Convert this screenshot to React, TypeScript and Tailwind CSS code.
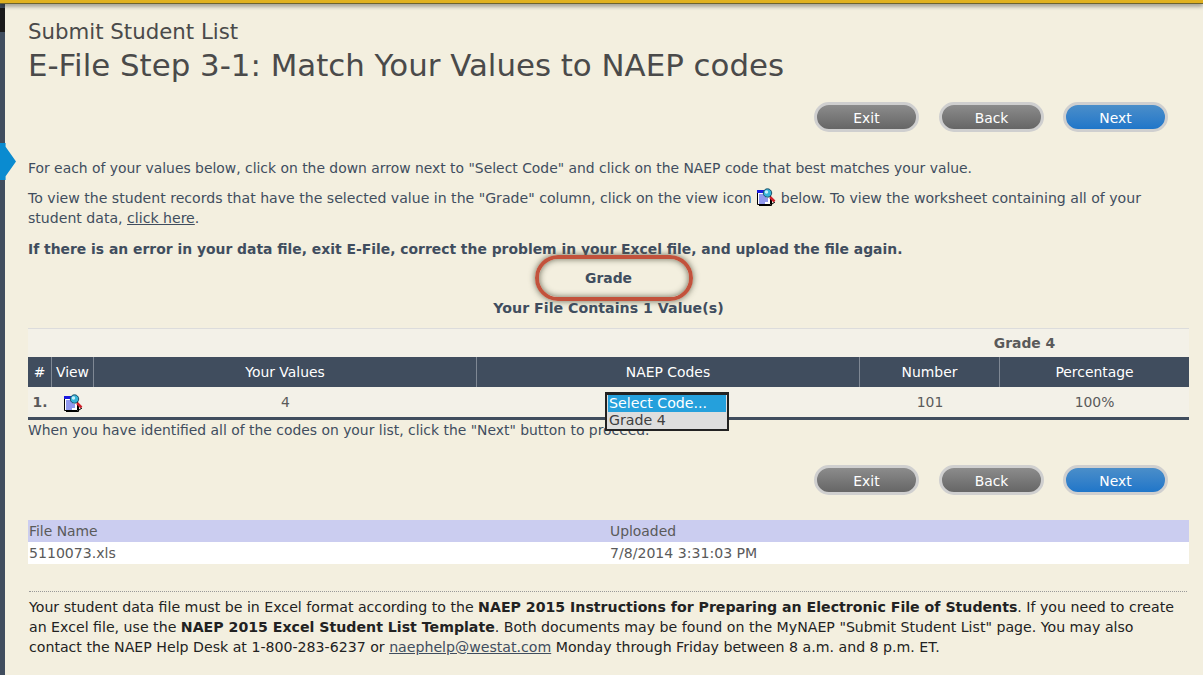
import React from 'react';

const ViewIcon = () => (
  <svg width="20" height="18" viewBox="0 0 20 18" className="block">
    <path d="M1.5 2.5h13v14h-13z" fill="#fff" stroke="#000" />
    <path d="M15.5 9v8.5H3" fill="none" stroke="#000" />
    <rect x="1" y="2" width="8" height="3" fill="#1a1ae0" />
    <path d="M3 7h5M3 9h7M3 11h9M3 13h9M3 15h6" stroke="#2233dd" />
    <path d="M14 9l4.5 4.5" stroke="#d0202a" strokeWidth="2.5" />
    <path d="M16 16l3-2" stroke="#000" />
    <circle cx="11.5" cy="5" r="4.2" fill="#35b4d8" stroke="#1d5068" />
    <circle cx="10.5" cy="4" r="1.7" fill="#c8f0fa" />
  </svg>
);

const PillButton = ({ label, primary }: { label: string; primary?: boolean }) => (
  <button
    className={`w-[105px] h-[30px] pt-[3px] rounded-full border-[3px] border-[#cfcfcf] text-white text-[13.9px] leading-none ${
      primary ? 'bg-gradient-to-b from-[#4a8ec9] to-[#1f76c9]' : 'bg-gradient-to-b from-[#8c8c8c] to-[#666666]'
    }`}
  >
    {label}
  </button>
);

const ButtonRow = () => (
  <div className="flex justify-end gap-[20px] pr-[21px]">
    <PillButton label="Exit" />
    <PillButton label="Back" />
    <div className="-ml-px"><PillButton label="Next" primary /></div>
  </div>
);

export default function App() {
  return (
    <div className="relative w-[1203px] h-[675px] overflow-hidden flex flex-col bg-[#f3efdf] text-[#404d5e] font-['DejaVu_Sans',sans-serif] text-[13.9px]">
      <div className="h-[4px] shrink-0 bg-[#e0b120] border-b border-[#6b6330] shadow-[0_2px_4px_rgba(0,0,0,0.45)] z-10" />
      <div className="flex flex-1 min-h-0">
        <aside className="relative w-[5px] shrink-0 bg-[#404d5e]">
          <div className="h-[24px] bg-[#1a1a1a] mt-[4px]" />
          <div className="absolute left-0 top-[139px] w-[16px] h-[37px] bg-[#0a8bd0] [clip-path:polygon(0_0,35%_0,35%_10%,100%_50%,35%_90%,35%_100%,0_100%)]" />
        </aside>
        <main className="flex-1 min-w-0 pl-[23px] pr-[14px] relative">
          <div className="text-[21.3px] leading-[24px] mt-[16px] text-[#4a4a4a]">Submit Student List</div>
          <h1 className="text-[30.85px] leading-[36px] mt-[3px] text-[#4a4a4a]">E-File Step 3-1: Match Your Values to NAEP codes</h1>
          <div className="mt-[19px]">
            <ButtonRow />
          </div>
          <p className="mt-[26px] leading-[20px]">
            For each of your values below, click on the down arrow next to "Select Code" and click on the NAEP code that best matches your value.
          </p>
          <p className="mt-[10px] leading-[20px] text-[14.1px]">
            To view the student records that have the selected value in the "Grade" column, click on the view icon <span className="inline-block h-[14px] w-[20px] align-[-2px]"><span className="block -mt-[3px]"><ViewIcon /></span></span> below. To view the worksheet containing all of your student data, <a className="underline">click here</a>.
          </p>
          <p className="mt-[11px] leading-[20px] font-bold">
            If there is an error in your data file, exit E-File, correct the problem in your Excel file, and upload the file again.
          </p>
          <div className="flex justify-center -mt-[4px]">
            <div className="ml-[11px] pr-[11px] w-[158px] h-[46px] rounded-full border-[4px] border-[#c2523c] shadow-[inset_0_0_6px_rgba(90,90,70,0.9),0_0_6px_rgba(90,90,70,0.9)] flex items-center justify-center font-bold">
              Grade
            </div>
          </div>
          <div className="text-center font-bold leading-[18px] -mt-[2px] text-[14.2px]">Your File Contains 1 Value(s)</div>
          <div className="mt-[11px] border-t border-[#dcdcdc] bg-[#f3f1e8]">
            <div className="flex h-[28px] items-center">
              <div className="w-[832px]" />
              <div className="flex-1 font-bold text-[#5a5a5a] text-center">Grade 4</div>
            </div>
            <div className="flex h-[30px] bg-[#404d5e] text-white divide-x divide-[#7f8894] items-center">
              <div className="w-[24px] h-full flex items-center justify-center">#</div>
              <div className="w-[42px] h-full flex items-center justify-center">View</div>
              <div className="w-[383px] h-full flex items-center justify-center">Your Values</div>
              <div className="w-[383px] h-full flex items-center justify-center">NAEP Codes</div>
              <div className="w-[140px] h-full flex items-center justify-center">Number</div>
              <div className="flex-1 h-full flex items-center justify-center">Percentage</div>
            </div>
            <div className="relative flex h-[33px] pt-px items-center border-b-[3px] border-[#404d5e] text-[#5a5a5a]">
              <div className="w-[24px] text-center font-bold">1.</div>
              <div className="w-[42px] flex justify-center"><ViewIcon /></div>
              <div className="w-[383px] text-center">4</div>
              <div className="w-[383px]" />
              <div className="w-[140px] text-center">101</div>
              <div className="flex-1 text-center">100%</div>
              <div className="absolute left-[577px] top-[5px] z-10 w-[124px] border-2 border-t-[3px] border-[#222] bg-[#dedede] text-[#404040] text-[14.2px] leading-[17px] px-px">
                <div className="bg-[#25a0dc] text-white pl-px">Select Code...</div>
                <div className="pl-px">Grade 4</div>
              </div>
            </div>
          </div>
          <p className="leading-[20px]">When you have identified all of the codes on your list, click the "Next" button to proceed.</p>
          <div className="mt-[25px]">
            <ButtonRow />
          </div>
          <div className="mt-[25px] flex h-[22px] items-center pl-px bg-[#cbcdf0] text-[#5a5a5a]">
            <div className="w-[581px]">File Name</div>
            <div>Uploaded</div>
          </div>
          <div className="flex h-[22px] pt-[2px] items-center pl-px bg-white text-[#5a5a5a] text-[14.1px]">
            <div className="w-[581px]">5110073.xls</div>
            <div>7/8/2014 3:31:03 PM</div>
          </div>
          <div className="mt-[27px] ml-px mr-[2px] border-t border-dotted border-[#999] pt-[5px] leading-[20px] text-[#222] text-[14.15px]">
            Your student data file must be in Excel format according to the <b>NAEP 2015 Instructions for Preparing an Electronic File of Students</b>. If you need to create an Excel file, use the <b>NAEP 2015 Excel Student List Template</b>. Both documents may be found on the MyNAEP "Submit Student List" page. You may also contact the NAEP Help Desk at 1-800-283-6237 or <a className="underline text-[#404d5e]">naephelp@westat.com</a> Monday through Friday between 8 a.m. and 8 p.m. ET.
          </div>
        </main>
      </div>
    </div>
  );
}
